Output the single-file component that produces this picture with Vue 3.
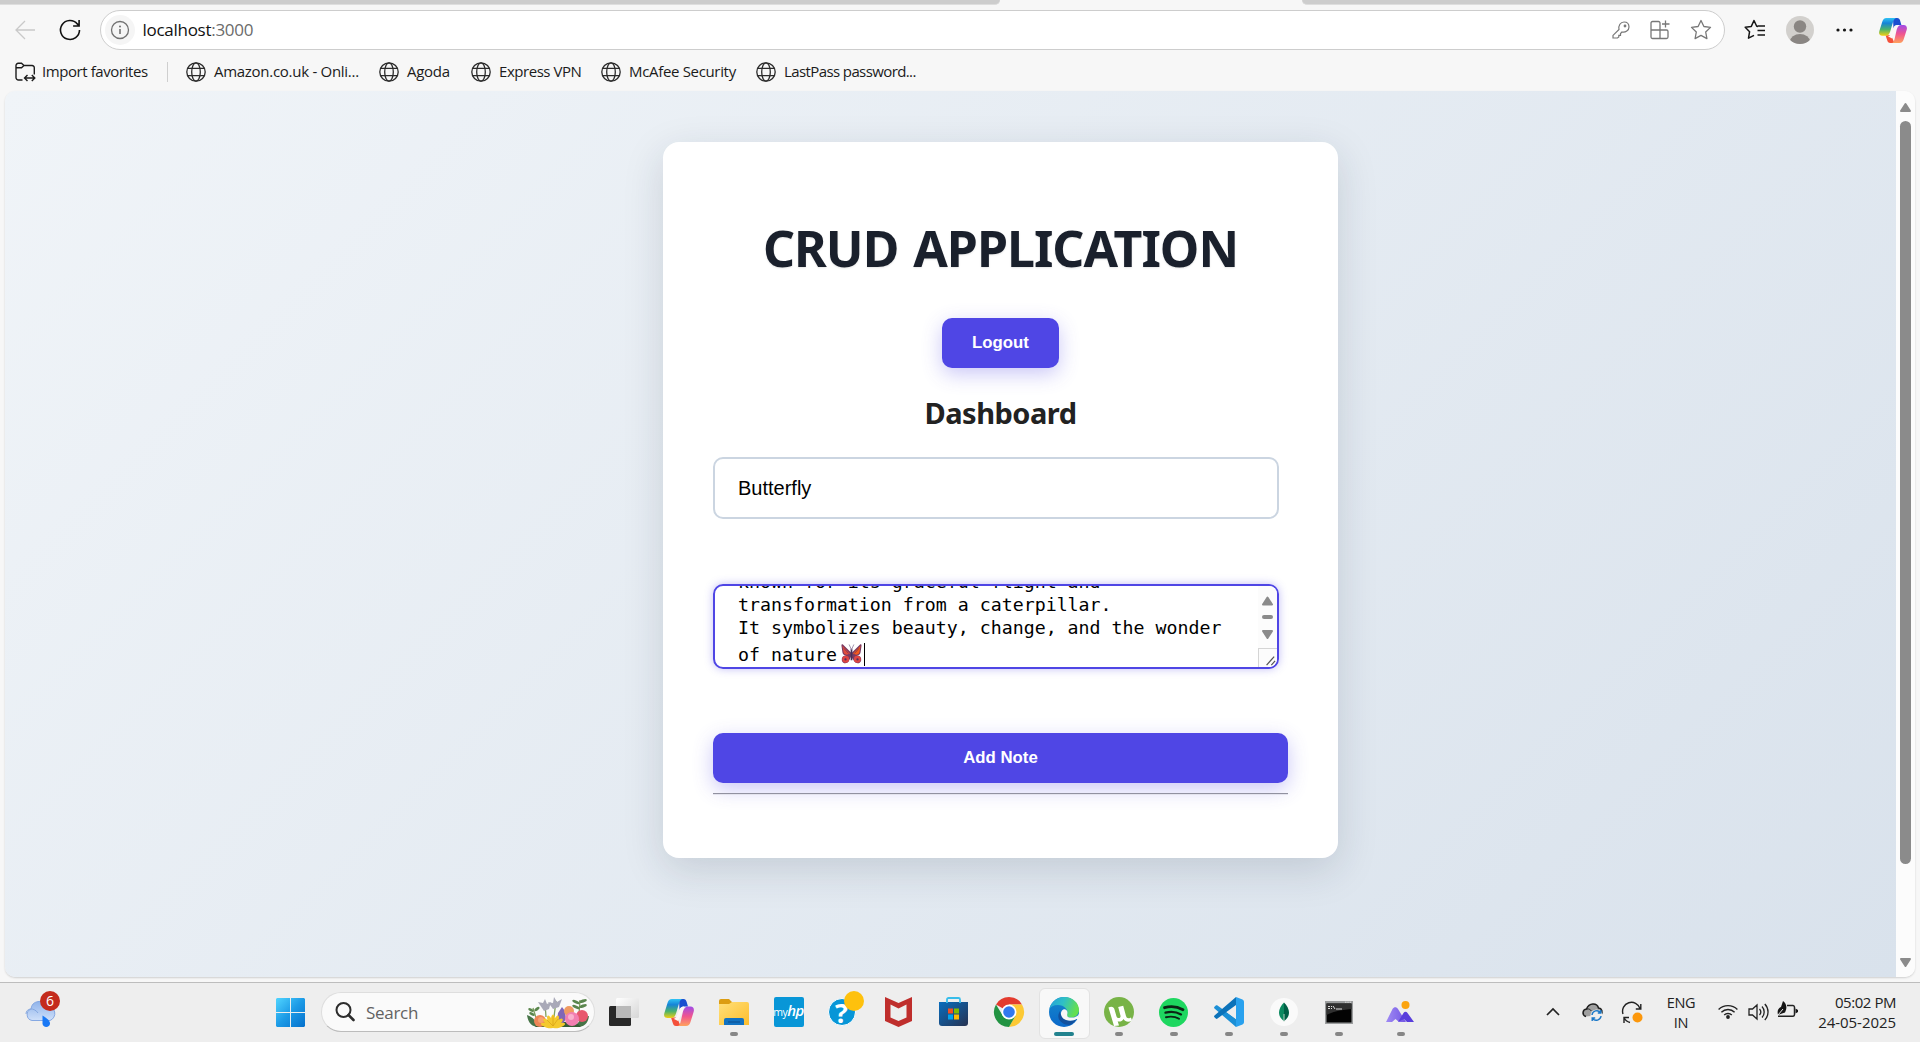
<script setup>
const bookmarks = [
  { label: 'Amazon.co.uk - Onli...', width: 144, gap: 21, spacing: -0.28 },
  { label: 'Agoda', width: 43, gap: 21, spacing: -0.3 },
  { label: 'Express VPN', width: 82, gap: 20, spacing: -0.45 },
  { label: 'McAfee Security', width: 107, gap: 20, spacing: -0.33 },
  { label: 'LastPass password...', width: 132, gap: 0, spacing: -0.6 },
]
const petals = [-75, -50, -25, 0, 25, 50, 75]
</script>

<template>
  <div class="screen">
    <svg class="defs" width="0" height="0">
      <defs>
        <linearGradient id="cpA" x1="0" y1="0" x2="0" y2="1"><stop offset="0" stop-color="#2fc4f5" /><stop offset=".3" stop-color="#1683d8" /><stop offset=".65" stop-color="#4bb36b" /><stop offset="1" stop-color="#f2cf12" /></linearGradient>
        <linearGradient id="cpB" x1="0" y1="0" x2="0" y2="1"><stop offset="0" stop-color="#a04be8" /><stop offset=".5" stop-color="#f0558f" /><stop offset="1" stop-color="#ffa35c" /></linearGradient>
        <symbol id="copilot" viewBox="0 0 30 27">
          <path d="M15 0h4.500c1.800 0 2.600 1.200 3.100 2.800L24 7.500h-4c-2.500 0-3.500 1.500-4.500 4z" fill="#1a4fd0" />
          <path d="M7 18.500h6l3.500 8.500H12c-1.800 0-2.700-1.200-3.200-3z" fill="#f4503a" />
          <path d="M20 7.500c-2.500 0-4 1-5 4l-2 5c-.6 1.800-1.600 3-3.500 3.200L14 22l6-12z" fill="#fdf6f6" />
          <path d="M8 0h10.500c-2 .5-2.800 2-3.500 4.500L12 14.500c-.9 3-2.300 4.500-5 4.500H3.500C.5 19-.5 17 .4 14L3.500 4C4.300 1.500 5.500 0 8 0z" fill="url(#cpA)" />
          <path d="M22 27h-8.500c2-.5 2.600-2 3.200-4.500L19 12.500c.9-3 2.300-5 5-5h2.500c3 0 4 2.500 3.100 5.500L26.500 23c-.8 2.500-2 4-4.500 4z" fill="url(#cpB)" />
        </symbol>
        <symbol id="globe" viewBox="0 0 20 20">
          <g fill="none" stroke="#2b2b2b" stroke-width="1.300"><circle cx="10" cy="10" r="9.200" /><ellipse cx="10" cy="10" rx="4.300" ry="9.200" /><path d="M1.800 6.300h16.400M1.800 13.700h16.400" /></g>
        </symbol>
      </defs>
    </svg>

    <div class="tabs"><i class="tab-left"></i><i class="tab-right"></i></div>

    <header class="toolbar">
      <svg class="back" width="20" height="20" viewBox="0 0 20 20" fill="none" stroke="#c9c9c9" stroke-width="1.300"><path d="M10 1 1 10l9 9M1 10h19" /></svg>
      <svg class="reload" width="22" height="22" viewBox="0 0 22 22" fill="none" stroke="#111" stroke-width="1.600"><path d="M20.500 11a9.500 9.500 0 1 1-2.200-6.100L20 6.600M20.100 1v6h-6" /></svg>
      <div class="address">
        <span class="info"><svg width="20" height="20" viewBox="0 0 20 20" fill="none" stroke="#717171" stroke-width="1.300"><circle cx="10" cy="10" r="8.500" /><path d="M10 9v5" stroke-width="1.600" /><circle cx="10" cy="6.500" r="1" fill="#717171" stroke="none" /></svg></span>
        <span class="url">localhost<span class="port">:3000</span></span>
        <span class="address-icons">
          <svg width="18" height="18" viewBox="0 0 18 18" fill="none" stroke="#777" stroke-width="1.200"><path d="M7 8.500C6.200 4.500 8.500 1 12 1c3 0 5 2 5 5 0 3.500-3.500 5.700-7 5L8.500 12.500v1.800H6.800V16L5.500 17H1v-2.600z" /><circle cx="13" cy="5" r=".8" fill="#777" /></svg>
          <svg width="20" height="20" viewBox="0 0 20 20" fill="none" stroke="#777" stroke-width="1.300"><path d="M10 10V3a1.500 1.500 0 0 0-1.500-1.500h-6A1.500 1.500 0 0 0 1 3v14a1.500 1.500 0 0 0 1.500 1.500h14A1.500 1.500 0 0 0 18 17v-5.500a1.500 1.500 0 0 0-1.500-1.500H1M10 10v8.500M15.500.5v7M12 4h7.500" /></svg>
          <svg width="22" height="22" viewBox="0 0 22 22" fill="none" stroke="#777" stroke-width="1.300" stroke-linejoin="round"><path d="m11 1.500 2.900 6 6.600.9-4.800 4.600 1.200 6.600-5.900-3.200-5.900 3.200 1.200-6.600-4.800-4.600 6.600-.9z" /></svg>
        </span>
      </div>
      <svg class="favs" width="22" height="22" viewBox="0 0 22 22" fill="none" stroke="#161616" stroke-width="1.500" stroke-linejoin="round"><path d="M14 7.500l-1.300-.2L10 1.500 7.300 7.400l-6.100.9 4.400 4.400-1.100 6.500L10 16.400M13.500 7h7.500M13.500 11.500h7.500M13.500 16h7.500" /></svg>
      <svg class="avatar" width="28" height="28" viewBox="0 0 28 28"><defs><clipPath id="av"><circle cx="14" cy="14" r="14" /></clipPath></defs><circle cx="14" cy="14" r="14" fill="#d2d0cd" /><g clip-path="url(#av)" fill="#8a8683"><circle cx="14" cy="10.500" r="6.200" /><ellipse cx="14" cy="25.500" rx="10" ry="7.500" /></g></svg>
      <svg class="dots" width="17" height="4" viewBox="0 0 17 4" fill="#161616"><circle cx="2" cy="2" r="1.600" /><circle cx="8.500" cy="2" r="1.600" /><circle cx="15" cy="2" r="1.600" /></svg>
      <svg width="28" height="27"><use href="#copilot" /></svg>
    </header>

    <nav class="bookmarks">
      <svg width="20" height="20" viewBox="0 0 20 20" fill="none" stroke="#1c1c1c" stroke-width="1.400"><path d="M7.500 18H3.500A2.500 2.500 0 0 1 1 15.500V3.500A2.200 2.200 0 0 1 3.200 1.300H6.500L9 3.500h8A2.300 2.300 0 0 1 19.300 6v6.500M1 5.700h5.500L9 3.500M10 16h9.500M12.500 13l-3 3 3 3M16.800 13l3 3-3 3" /></svg>
      <span class="import">Import favorites</span>
      <i class="divider"></i>
      <template v-for="b in bookmarks" :key="b.label">
        <svg width="20" height="20"><use href="#globe" /></svg>
        <span class="bm" :style="{ width: b.width + 'px', marginRight: b.gap + 'px', letterSpacing: b.spacing + 'px' }">{{ b.label }}</span>
      </template>
    </nav>

    <div class="viewport">
      <main class="page">
        <section class="card">
          <h1>CRUD APPLICATION</h1>
          <button class="btn logout">Logout</button>
          <h2>Dashboard</h2>
          <div class="field">Butterfly</div>
          <div class="area">
            <div class="lines">
              <p>known for its graceful flight and</p>
              <p>transformation from a caterpillar.</p>
              <p>It symbolizes beauty, change, and the wonder</p>
              <p class="last">of nature<svg class="butterfly" width="21" height="20" viewBox="0 0 22 21"><path d="M10.500 9 2 .5C.8 0 .3.800.5 2L1.500 9c.3 2 2 3 4 3C2 12 .5 14 .8 17c.4 3.500 5 4.500 7.200 1.500L10.500 13l3.500 5.500c2.200 3 6.800 2 7.200-1.500.3-3-1.200-5-4.700-5 2 0 3.700-1 4-3l1-7c.2-1.200-.3-2-1.500-1.500L11.500 9z" fill="#7a3a62" /><path d="m1.500 1.800 8 8.200-3.500 1.200C3.500 11.200 2.700 10 2.500 8z" fill="#e14c3c" /><path d="m20.500 1.800-8 8.200 3.500 1.200c2.500 0 3.300-1.200 3.500-3.200z" fill="#f4591c" /><path d="M3 4.500 8 10M19 4.500 14 10" stroke="#54305f" stroke-width=".7" /><circle cx="4.900" cy="16" r="3.600" fill="#df4543" /><circle cx="17.100" cy="16" r="3.600" fill="#df4543" /><circle cx="4.700" cy="16.200" r="1.200" fill="#54305f" /><circle cx="17.300" cy="16.200" r="1.200" fill="#54305f" /><path d="M11 5v12" stroke="#453059" stroke-width="1.800" /><path d="M11 6 8.500.5M11 6 13.500.5" stroke="#8b789b" stroke-width=".8" fill="none" /></svg><i class="caret"></i></p>
            </div>
            <div class="mini-scroll">
              <svg width="19" height="62" viewBox="0 0 19 62" fill="#8b8b8b"><path d="m9.500 11.500 4.500 7H5zM9.500 52 14 45H5z" stroke="#8b8b8b" stroke-width="2" stroke-linejoin="round" /><rect x="4" y="29" width="11" height="4" rx="2" /></svg>
              <svg class="grip" width="19" height="19" viewBox="0 0 19 19" fill="none" stroke="#555" stroke-width="1.300"><path d="m8 17 8-9M13 17l4-4.500" /></svg>
            </div>
          </div>
          <button class="btn add">Add Note</button>
          <hr />
        </section>
      </main>
      <div class="scrollbar">
        <svg width="19" height="30" viewBox="0 0 19 30"><path d="m9.500 13 4.500 7H5z" fill="#8b8b8b" stroke="#8b8b8b" stroke-width="2" stroke-linejoin="round" /></svg>
        <i class="thumb"></i>
        <svg width="19" height="30" viewBox="0 0 19 30"><path d="m9.500 19 4.500-7H5z" fill="#8b8b8b" stroke="#8b8b8b" stroke-width="2" stroke-linejoin="round" /></svg>
      </div>
    </div>

    <footer class="taskbar">
      <div class="weather">
        <svg width="34" height="36" viewBox="0 0 34 36"><defs><linearGradient id="cl" x1="0" y1="0" x2="0" y2="1"><stop offset="0" stop-color="#8fb3ea" /><stop offset="1" stop-color="#cfe0fa" /></linearGradient></defs><path d="M7 29.500a6 6 0 0 1-1-11.500A8.500 8.500 0 0 1 22 15a7.500 7.500 0 0 1 3 14.500z" fill="url(#cl)" stroke="#85a8e2" /><path d="M1 23c0-6 8-7 12-1" fill="none" stroke="#84a7e0" /><path d="M17.500 24.500c4 2.500 7.500 5 7.500 8 0 4.500-7.500 4.500-7.500 0z" fill="#1978f5" /></svg>
        <span class="badge">6</span>
      </div>
      <svg class="windows" width="29" height="29" viewBox="0 0 29 29"><defs><linearGradient id="wn" x1="0" y1="0" x2="1" y2="1"><stop offset="0" stop-color="#51d5ff" /><stop offset=".5" stop-color="#1c9ae6" /><stop offset="1" stop-color="#0470cc" /></linearGradient></defs><path d="M1 0h13v14H0V1zM15 0h13l1 1v13H15zM0 15h14v14H1l-1-1zM15 15h14v13l-1 1H15z" fill="url(#wn)" /></svg>
      <div class="search">
        <svg width="20" height="20" viewBox="0 0 20 20" fill="none" stroke="#2d2d2d" stroke-width="2"><circle cx="8.500" cy="8" r="7" /><path d="m13.500 13 5 5" stroke-width="2.600" stroke-linecap="round" /></svg>
        <span>Search</span>
        <svg class="flowers" width="62" height="31" viewBox="0 0 62 31">
          <path d="M0 18c6 2 10 7 12 12C5 30 1 26 0 18zM62 19c-7 1-11 5-13 11 8 0 12-3 13-11z" fill="#477448" />
          <path d="M8 30h46l-5-5H12z" fill="#365d36" />
          <path d="M10 24 6 11M52 18l1-15M19 20 18 6M27 20 29 4" stroke="#7fa05f" stroke-width="1.300" fill="none" />
          <g fill="#5a864d"><ellipse cx="4" cy="13" rx="3" ry="1.400" transform="rotate(25 4 13)" /><ellipse cx="10" cy="12" rx="3" ry="1.400" transform="rotate(-35 10 12)" /><ellipse cx="5" cy="17" rx="3" ry="1.400" transform="rotate(25 5 17)" /><ellipse cx="49" cy="5" rx="4" ry="1.500" transform="rotate(25 49 5)" /><ellipse cx="56" cy="4" rx="4" ry="1.500" transform="rotate(-20 56 4)" /><ellipse cx="49" cy="10" rx="4" ry="1.500" transform="rotate(25 49 10)" /><ellipse cx="56" cy="9" rx="4" ry="1.500" transform="rotate(-20 56 9)" /></g>
          <path d="m11 5 5 1 2-4 2 5 4-2-2 7-5 2zM21 5l5 1 1-6 3 5 5-3-3 8-6 2z" fill="#a9a9b8" />
          <path d="m35 10 3 4 1 8-4 6-5-4 1-8z" fill="#8066b7" />
          <circle cx="13" cy="24" r="6" fill="#ee8556" /><circle cx="14" cy="23" r="3" fill="#f7a271" />
          <circle cx="42" cy="14" r="5" fill="#f09b62" /><circle cx="55" cy="19" r="6" fill="#e8586e" /><circle cx="45" cy="22" r="7" fill="#f27fb1" /><circle cx="44" cy="20" r="3" fill="#f9b1ce" />
          <g fill="#f4c92d"><ellipse v-for="a in petals" :key="a" cx="26" cy="24" rx="2.300" ry="6.500" :transform="`rotate(${a} 26 30)`" /></g>
          <path d="M26 29l-6-6M26 29l5-7M26 29V19" stroke="#dba516" stroke-width=".8" />
        </svg>
      </div>
      <div class="apps">
        <div class="app"><svg width="30" height="29" viewBox="0 0 30 29"><defs><linearGradient id="tv" x1="0" y1="0" x2="1" y2="1"><stop offset="0" stop-color="#fff" /><stop offset="1" stop-color="#d6d6d6" /></linearGradient></defs><rect y="8" width="22" height="20" rx="1.500" fill="#282828" /><rect x="7" width="23" height="20" rx="1.500" fill="url(#tv)" /><path d="M7 8h15v12H7z" fill="#b9b9b9" /></svg></div>
        <div class="app"><svg width="30" height="27"><use href="#copilot" /></svg></div>
        <div class="app"><svg width="30" height="28" viewBox="0 0 30 28"><defs><linearGradient id="fd" x1="0" y1="0" x2="1" y2="1"><stop offset="0" stop-color="#ffe07a" /><stop offset="1" stop-color="#fdbd2c" /></linearGradient></defs><path d="M0 3a2 2 0 0 1 2-2h8l3 3h15v8H0z" fill="#dc9d12" /><path d="M0 6h10l3-2h15a2 2 0 0 1 2 2v21H0z" fill="url(#fd)" /><path d="M5 27v-5a2 2 0 0 1 2-2h16a2 2 0 0 1 2 2v5z" fill="#1172c2" /><path d="M9 24h12" stroke="#0b4c8c" /></svg><i class="run"></i></div>
        <div class="app"><div class="hp"><span>my</span><b>hp</b></div></div>
        <div class="app help"><div class="q">?</div><i class="dot"></i></div>
        <div class="app"><svg width="27" height="30" viewBox="0 0 27 30"><path fill="#bf2e2c" fill-rule="evenodd" d="m0 0 13.500 6L27 0v24l-13.500 6L0 24zM5.500 7.500V20.500l8 3.500 8-3.500V7.500l-8 4z" /></svg></div>
        <div class="app"><svg width="29" height="30" viewBox="0 0 29 30"><defs><linearGradient id="st" x1="0" y1="0" x2="1" y2="1"><stop offset="0" stop-color="#086dbe" /><stop offset="1" stop-color="#273251" /></linearGradient></defs><path d="M0 5h29v21a3 3 0 0 1-3 3H3a3 3 0 0 1-3-3z" fill="url(#st)" /><path d="M8 6V2.500A1.500 1.500 0 0 1 9.500 1h10A1.500 1.500 0 0 1 21 2.500V6" fill="none" stroke="#38bdea" stroke-width="1.800" /><path d="M9 11.500h5v5H9z" fill="#f25022" /><path d="M15 11.500h5v5h-5z" fill="#7fba00" /><path d="M9 17.500h5v5H9z" fill="#00a4ef" /><path d="M15 17.500h5v5h-5z" fill="#ffb900" /></svg></div>
        <div class="app"><svg width="30" height="30" viewBox="0 0 30 30"><path d="M15 15 2 7.500A15 15 0 0 1 28 7.500H15z" fill="#e33b2e" /><path d="M15 7.500H28A15 15 0 0 1 15 30l6.500-11.500z" fill="#fcc934" /><path d="M2 7.500A15 15 0 0 0 15 30l6.500-11.300L9 19z" fill="#229342" /><circle cx="15" cy="15" r="7.500" fill="#fff" /><circle cx="15" cy="15" r="5.800" fill="#3178ee" /></svg></div>
        <div class="app active"><svg width="30" height="30" viewBox="0 0 30 30"><defs><linearGradient id="eg" x1="0" y1="0" x2="1" y2=".3"><stop offset="0" stop-color="#249fdb" /><stop offset=".5" stop-color="#2fbfc6" /><stop offset="1" stop-color="#63df50" /></linearGradient><linearGradient id="eb" x1="0" y1="0" x2="0" y2="1"><stop offset="0" stop-color="#1688cb" /><stop offset="1" stop-color="#0a68ca" /></linearGradient></defs><circle cx="15" cy="15" r="15" fill="url(#eb)" /><path d="M.3 12C2 5 8 0 15 0c9 0 15 6 15 13 0 5-4 7.500-8 7.500-3.500 0-5-1.500-4-3.500C20 13 15 8 9 8 4.500 8 1.500 10 .3 12z" fill="url(#eg)" /><path d="M11 14c-5 8 2 14 10 14 3-1.400 5-3.500 6.500-6-3 2-7 2-10 1-4-1.300-6.500-5-6.500-9z" fill="#12509d" /><path d="M18.500 16c.2-3.500-3.500-5-5.500-2.500-2.500 3-.5 8 4 9.500 4 1.300 8 .7 10.500-1l2 0 .5-5c-2 3-5 3.700-8 3.500-3.500 0-4.500-1.500-3.500-4.500z" fill="#f7f7f7" /></svg><i class="run"></i></div>
        <div class="app"><svg width="30" height="30" viewBox="0 0 30 30"><circle cx="15" cy="15" r="15" fill="#78b347" /><path d="M4.500 10.500c3-1.500 5.300-.8 6 2l2 7c1 2.500 4.500 2 4-.8l-2.300-8.700 5-1.200 2.800 10.200c.5 2 2 2.500 4 2l1-.5 1 3c-3.500 2-6.500 1.500-8.500-1.500-1.500 2.300-3.500 3-5.800 2.300L15 28.500 10 29z" fill="#fff" /></svg><i class="run"></i></div>
        <div class="app"><svg width="29" height="29" viewBox="0 0 29 29"><circle cx="14.500" cy="14.500" r="14.500" fill="#1ed760" /><g fill="none" stroke="#0c2415" stroke-linecap="round"><path d="M5.500 9.700c6-1.700 13-1 18.500 2" stroke-width="2.800" /><path d="M6.500 14.600c5.500-1.400 11-.8 15.500 1.800" stroke-width="2.300" /><path d="M7 19.200c4.500-1 9.500-.5 13 1.600" stroke-width="1.900" /></g></svg><i class="run"></i></div>
        <div class="app"><svg width="30" height="30" viewBox="0 0 30 30"><path d="m22 22-18.500-13.500c-.6-.5-1.200-.5-1.700 0L.5 9.700c-.6.6-.6 1.200 0 1.800L22 30z" fill="#1b8fd6" /><path d="M22 8v14l-9.500-7z" fill="#eee" /><path d="M.5 18.500 22 0v8L3.500 21.500c-.6.5-1.200.5-1.700 0L.5 20.300c-.6-.6-.6-1.200 0-1.800z" fill="#0b72b9" /><path d="m22 0 6.500 2.500A2.500 2.500 0 0 1 30 5v20a2.500 2.500 0 0 1-1.500 2.500L22 30z" fill="#29a1ee" /></svg><i class="run"></i></div>
        <div class="app"><svg width="28" height="28" viewBox="0 0 28 28"><circle cx="14" cy="14" r="14" fill="#fafafa" /><path d="M14 4.500c3 3 5 6.500 5 10 0 3.500-2 6.500-5 8.500z" fill="#005f45" /><path d="M14 4.500c-3 3-5 6.500-5 10 0 3.500 2 6.500 5 8.500z" fill="#0c8960" /><path d="M14 16v7.500" stroke="#b4cfc0" /></svg><i class="run"></i></div>
        <div class="app"><svg width="28" height="23" viewBox="0 0 28 23"><path d="M0 0h28v23H0z" fill="#9b9d9e" /><path d="M1.500 2.500h25v19h-25z" fill="#030303" /><path d="M1.500 2.500h25V8C15 9 7 11 1.500 14z" fill="#303030" /><path d="M3 5.500h2M3 7.500h2M6.500 5v1M6.500 7v1M8 5l2 3M11 8h6" stroke="#ddd" fill="none" /><path d="M20 1.200h6" stroke="#ddd" stroke-dasharray="1.500 .8" /></svg><i class="run"></i></div>
        <div class="app mount"><svg width="29" height="22" viewBox="0 0 29 22"><defs><linearGradient id="mt" x1="0" y1="0" x2="1" y2="0"><stop offset="0" stop-color="#a08bf4" /><stop offset="1" stop-color="#7356e4" /></linearGradient></defs><circle cx="19.500" cy="4" r="4" fill="#fba40f" /><path d="M0 21 6.500 8C8 5.500 10.500 5.500 12 8l8 13h-7l-3.500-3L6 21z" fill="url(#mt)" /><path d="m12 21 5.500-9c1-1.600 3-1.600 4 0L28 21h-7l-3-3z" fill="#593edc" /></svg><i class="run"></i></div>
      </div>
      <div class="tray">
        <svg class="chev" width="14" height="9" viewBox="0 0 14 9" fill="none" stroke="#222" stroke-width="1.700"><path d="m1 8 6-6 6 6" /></svg>
        <svg class="cloud" width="22" height="19" viewBox="0 0 22 19"><path d="M4 13.500C-.5 12 .5 6.500 4.500 6 7-.5 15-.5 16.500 5c3.500.2 4.500 4 2.500 7" fill="#a0a0a0" stroke="#1d1d1d" stroke-width="1.500" /><path d="M4.500 6c3-.5 4 1 5 2" stroke="#222" fill="none" /><circle cx="14.500" cy="12.500" r="6" fill="#eee" /><path d="M10 12a4.800 4.800 0 0 1 8.500-2.500M19 13a4.800 4.800 0 0 1-8.500 2.500M18.800 7v3h-3M10.200 18v-3h3" fill="none" stroke="#1a78c8" stroke-width="1.400" /></svg>
        <svg class="sync" width="21" height="21" viewBox="0 0 21 21"><path d="M1 11A8.800 8.800 0 0 1 18 5.500M18.800 1v5h-5M8 19.500a9 9 0 0 1-6-5M2 20v-5.500h5" fill="none" stroke="#222" stroke-width="1.400" /><circle cx="15.500" cy="14.500" r="5" fill="#fc970b" /></svg>
        <div class="lang"><span>ENG</span><span>IN</span></div>
        <svg class="wifi" width="20" height="15" viewBox="0 0 20 15" fill="none" stroke="#222" stroke-width="1.400"><path d="M.6 5.500a13.300 13.300 0 0 1 18.800 0M3.400 8.300a9.300 9.300 0 0 1 13.200 0M6.200 11a5.400 5.400 0 0 1 7.600 0" /><circle cx="10" cy="13" r="1.900" fill="#222" stroke="none" /></svg>
        <svg class="sound" width="21" height="18" viewBox="0 0 21 18" fill="none" stroke="#222" stroke-width="1.300"><path d="M1 6v6h3.500L9 16V2L4.500 6zM11.500 6a4.500 4.500 0 0 1 0 6M14 3.500a8 8 0 0 1 0 11M16.800 1a11.500 11.500 0 0 1 0 16" /></svg>
        <svg class="battery" width="21" height="17" viewBox="0 0 21 17"><path d="M10 4.500h6A1.800 1.800 0 0 1 17.500 6v7.500a1.800 1.800 0 0 1-1.500 1.800H1" fill="none" stroke="#222" stroke-width="1.500" /><path d="M18.500 7.500 21 9v2l-2.500 1.500zM6 0c3.500 2.500 4.500 6.500 2 11.500l-3 1L1 14c-1-4 0-6.500 3-8z" fill="#151515" /><path d="m1 14 5-6" stroke="#eee" /></svg>
        <div class="clock"><span class="time">05:02 PM</span><span class="date">24-05-2025</span></div>
      </div>
    </footer>
  </div>
</template>

<style>
body { margin: 0; overflow: hidden; }
</style>

<style scoped>
* { box-sizing: border-box; }
svg { display: block; flex: none; overflow: visible; }
.screen { width: 1920px; height: 1042px; display: flex; flex-direction: column; background: #f7f7f7; font-family: "Open Sans", "Noto Sans", sans-serif; overflow: hidden; }
.defs { position: absolute; }
.tabs { height: 5px; display: flex; justify-content: space-between; }
.tabs i { height: 5px; background: #cdcdcd; border-bottom: 1px solid #dedede; }
.tab-left { width: 1000px; border-bottom-right-radius: 8px; }
.tab-right { width: 618px; border-bottom-left-radius: 8px; }

.toolbar { height: 50px; display: flex; align-items: center; padding-left: 15px; }
.reload { margin-left: 24px; }
.address { margin-left: 19px; width: 1625px; height: 40px; border: 1px solid #cdcdcd; border-radius: 20px; background: #fff; display: flex; align-items: center; padding: 0 12px 0 4px; }
.info { width: 30px; height: 30px; border-radius: 50%; background: #f5f5f5; display: flex; align-items: center; justify-content: center; }
.url { margin-left: 7.500px; font-size: 17px; letter-spacing: -.28px; color: #111; line-height: 24px; }
.port { color: #6b6b6b; }
.address-icons { margin-left: auto; display: flex; align-items: center; gap: 20px; }
.favs { margin-left: 19px; }
.avatar { margin-left: 20px; }
.dots { margin: 0 26px 0 22px; }

.bookmarks { height: 36px; display: flex; align-items: center; padding: 0 0 3px 15px; font-size: 15px; line-height: 20px; color: #1b1b1b; white-space: nowrap; }
.import { width: 105px; margin-left: 7px; letter-spacing: -.42px; padding-bottom: 1px; }
.divider { width: 1px; height: 20px; background: #cfcfcf; margin: 0 18px 0 20px; }
.bm { margin-left: 8px; padding-bottom: 1px; }

.viewport { margin-left: 5px; width: 1910px; height: 886px; display: flex; border-radius: 10px; overflow: hidden; box-shadow: 0 1px 2px #cfcfcf; }
.page { width: 1891px; padding: 51px 0 0 658px; background: linear-gradient(135deg, #f0f4f8, #d9e2ec); }
.scrollbar { width: 19px; background: #fcfcfc; display: flex; flex-direction: column; align-items: center; }
.thumb { width: 11px; height: 744px; margin-bottom: 83px; border-radius: 6px; background: #8b8b8b; }
.card { width: 675px; height: 716px; padding: 50px; border-radius: 16px; background: #fff; box-shadow: 0 12px 40px rgba(30, 41, 59, .15); display: flex; flex-direction: column; align-items: flex-start; }
h1 { margin: 26px 0 40px; width: 575px; text-align: center; font: 700 50px/60px "Noto Sans", sans-serif; color: #1a202c; letter-spacing: -1px; word-spacing: 3px; white-space: nowrap; text-shadow: 0 1px 2px rgba(0, 0, 0, .1); }
.btn { border: 0; height: 50px; padding: 0; border-radius: 10px; background: #4f46e5; color: #fff; font: 700 16.800px/48px "Liberation Sans", Arial, sans-serif; box-shadow: 0 6px 20px rgba(79, 70, 229, .3); }
.logout { width: 117px; align-self: center; }
h2 { margin: 25px 0 24px; width: 575px; text-align: center; font: 700 29px/40px "Noto Sans", sans-serif; color: #222; letter-spacing: -.5px; }
.field { width: 566px; height: 62px; border: 2px solid #cbd5e1; border-radius: 10px; padding-left: 23px; font: 20px/58px "Liberation Sans", Arial, sans-serif; color: #000; }
.area { margin: 65px 0 64px; width: 566px; height: 85px; border: 2px solid #4f46e5; border-radius: 10px; overflow: hidden; display: flex; justify-content: space-between; box-shadow: 0 0 8px rgba(79, 70, 229, .35); }
.lines { padding-left: 23px; margin-top: -16.300px; }
.lines p { margin: 0; height: 23.400px; font: 18.250px/23.400px "DejaVu Sans Mono", monospace; white-space: nowrap; color: #000; }
.lines .last { height: 29px; line-height: 29px; display: flex; align-items: center; }
.butterfly { margin-left: 4px; }
.caret { width: 1px; height: 23px; margin-left: 2px; background: #000; }
.mini-scroll { width: 19px; background: #fcfcfc; }
.grip { border-top: 1px solid #d5d5d5; border-left: 1px solid #d5d5d5; }
.add { width: 575px; }
hr { width: 575px; height: 2px; margin: 10px 0 0; border: 0; border-top: 1px solid #9191a0; border-bottom: 1px solid #e4e4ee; }

.taskbar { margin-top: 5px; height: 60px; flex: none; border-top: 1px solid #bdbdbd; background: #eee; display: flex; align-items: flex-start; color: #222; }
.weather { position: relative; margin: 8px 0 0 25px; width: 36px; }
.badge { position: absolute; left: 15px; top: 0; width: 20px; height: 20px; border-radius: 50%; background: #c42b1c; color: #fff; font-size: 14px; line-height: 20px; text-align: center; }
.windows { margin: 15px 0 0 215px; }
.search { margin: 9px 0 0 16px; width: 274px; height: 40px; border: 1px solid #dedede; border-bottom-color: #bcbcbc; border-radius: 20px; background: #fafafa; display: flex; align-items: center; padding: 0 5px 0 13px; font-size: 17px; letter-spacing: -.3px; color: #626262; }
.search span { margin-left: 11px; }
.flowers { margin-left: auto; }
.apps { display: flex; margin-left: 1px; }
.app { position: relative; width: 55px; height: 58px; display: flex; align-items: center; justify-content: center; }
.run { position: absolute; left: 50%; top: 49px; width: 8px; height: 4px; margin-left: -4px; border-radius: 2px; background: #868686; }
.active::before { content: ""; position: absolute; left: 3px; top: 5px; width: 49px; height: 49px; border: 1px solid #e2e2e2; border-radius: 6px; background: #f8f8f8; }
.active svg { position: relative; }
.active .run { width: 20px; margin-left: -10px; background: #22828e; }
.mount { margin-left: 7px; }
.hp { width: 30px; height: 30px; border-radius: 2px; background: #0896d7; color: #fff; display: flex; align-items: baseline; justify-content: center; font-size: 10.500px; line-height: 27px; letter-spacing: -.5px; }
.hp b { font-size: 15px; font-style: italic; font-weight: 600; }
.q { width: 28px; height: 28px; margin-right: 4px; border-radius: 50%; border: 1px solid #fff; background: #0896d7; color: #fff; font-size: 27px; font-weight: 700; line-height: 27px; text-align: center; }
.dot { position: absolute; left: 28px; top: 8px; width: 20px; height: 20px; border-radius: 50%; background: #fec10d; }
.tray { display: flex; margin-left: 118px; }
.chev { margin-top: 24px; }
.cloud { margin: 20px 0 0 22px; }
.sync { margin: 20px 0 0 18px; }
.lang { width: 40px; margin: 10px 0 0 18px; display: flex; flex-direction: column; align-items: center; font-size: 14.500px; line-height: 20px; letter-spacing: -.3px; }
.wifi { margin: 21px 0 0 17px; }
.sound { margin: 20px 0 0 10px; }
.battery { margin: 18px 0 0 8px; }
.clock { width: 90px; margin: 9px 0 0 8px; display: flex; flex-direction: column; align-items: flex-end; font-size: 15px; line-height: 20px; letter-spacing: -.45px; white-space: nowrap; }
.date { letter-spacing: -.05px; }
</style>
